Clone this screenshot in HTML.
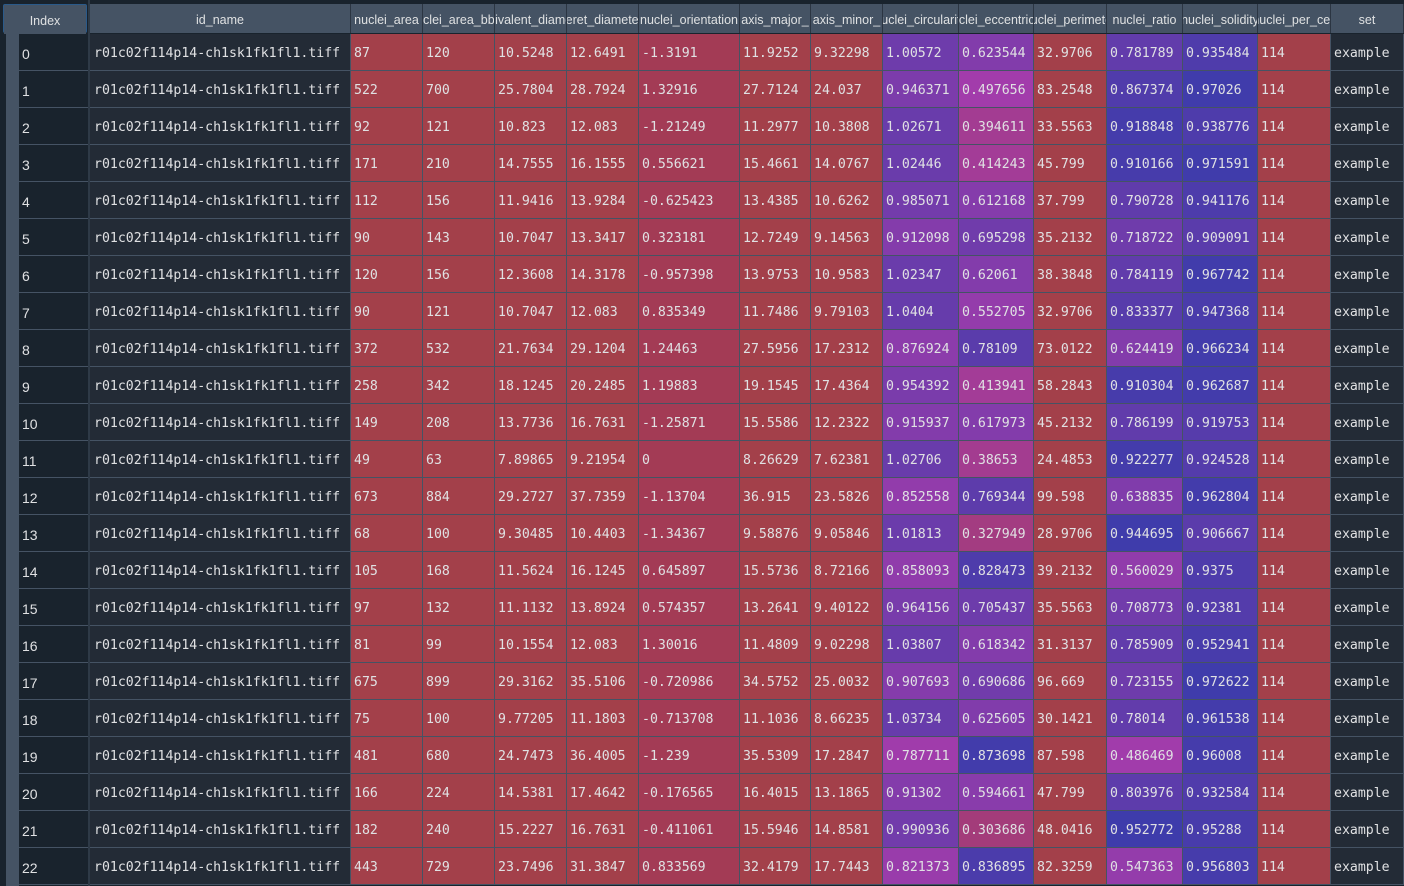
<!DOCTYPE html>
<html><head><meta charset="utf-8"><style>
*{margin:0;padding:0;box-sizing:border-box}
body{width:1404px;height:886px;overflow:hidden;background:#19232D;position:relative;font-family:"DejaVu Sans Mono","Liberation Mono",monospace;color:#E0E1E3}
.hd{position:absolute;top:4px;height:29px;display:flex;font-family:"Liberation Sans","DejaVu Sans",sans-serif;font-size:12.5px;color:#DFE1E2}
.hd div{background:#455364;border-right:1px solid #2b3542;display:flex;justify-content:center;align-items:center;overflow:hidden;white-space:nowrap;height:29px;padding-top:3px}
#hi{left:3px;width:84px;border:1px solid #2a5a8a;border-radius:2px}
#hm{left:90px}
#strip{position:absolute;left:6px;top:34px;width:13px;height:852px;background:#455364}
.ix{position:absolute;left:19px;width:69px;height:37px;border-bottom:1px solid #455364;font-family:"Liberation Sans",sans-serif;font-size:14px;line-height:36px;padding-top:2px;padding-left:3px}
.r{position:absolute;left:90px;height:37px;display:flex;font-size:13.2px}
.r span{display:block;height:37px;line-height:36px;padding-top:2px;padding-left:3px;border-right:1px solid #455364;border-bottom:1px solid #455364;white-space:nowrap;overflow:hidden;background:#A3404A}
.r span:nth-child(1){width:261px;background:#232B36;padding-left:4px}
.r span:nth-child(2),.r span:nth-child(3),.r span:nth-child(4),.r span:nth-child(5){width:72px}
.r span:nth-child(6){width:101px;background:#A33B55}
.r span:nth-child(7){width:71px}
.r span:nth-child(8){width:72px}
.r span:nth-child(9){width:76px}
.r span:nth-child(10){width:75px}
.r span:nth-child(11){width:73px}
.r span:nth-child(12){width:76px}
.r span:nth-child(13){width:75px}
.r span:nth-child(14){width:73px}
.r span:nth-child(15){width:73px;background:#232B36}
#lines{position:absolute;left:88px;top:0;width:2px;height:886px;background:#2e3a47}
</style></head><body>
<div id="lines"></div>
<div class="hd" id="hi"><div style="width:82px;border:none">Index</div></div>
<div class="hd" id="hm">
<div style="width:261px">id_name</div><div style="width:72px">nuclei_area</div><div style="width:72px">nuclei_area_bbox</div><div style="width:72px">equivalent_diameter</div><div style="width:72px">feret_diameter</div><div style="width:101px">nuclei_orientation</div><div style="width:71px">axis_major_</div><div style="width:72px">axis_minor_</div><div style="width:76px">nuclei_circularity</div><div style="width:75px">nuclei_eccentricity</div><div style="width:73px">nuclei_perimeter</div><div style="width:76px">nuclei_ratio</div><div style="width:75px">nuclei_solidity</div><div style="width:73px">nuclei_per_cell</div><div style="width:73px">set</div>
</div>
<div id="strip"></div>
<div class="ix" style="top:34px">0</div><div class="ix" style="top:71px">1</div><div class="ix" style="top:108px">2</div><div class="ix" style="top:145px">3</div><div class="ix" style="top:182px">4</div><div class="ix" style="top:219px">5</div><div class="ix" style="top:256px">6</div><div class="ix" style="top:293px">7</div><div class="ix" style="top:330px">8</div><div class="ix" style="top:367px">9</div><div class="ix" style="top:404px">10</div><div class="ix" style="top:441px">11</div><div class="ix" style="top:478px">12</div><div class="ix" style="top:515px">13</div><div class="ix" style="top:552px">14</div><div class="ix" style="top:589px">15</div><div class="ix" style="top:626px">16</div><div class="ix" style="top:663px">17</div><div class="ix" style="top:700px">18</div><div class="ix" style="top:737px">19</div><div class="ix" style="top:774px">20</div><div class="ix" style="top:811px">21</div><div class="ix" style="top:848px">22</div>
<div class="r" style="top:34px"><span>r01c02f114p14-ch1sk1fk1fl1.tiff</span><span>87</span><span>120</span><span>10.5248</span><span>12.6491</span><span>-1.3191</span><span>11.9252</span><span>9.32298</span><span>1.00572</span><span>0.623544</span><span>32.9706</span><span>0.781789</span><span>0.935484</span><span>114</span><span>example</span></div>
<div class="r" style="top:71px"><span>r01c02f114p14-ch1sk1fk1fl1.tiff</span><span>522</span><span>700</span><span>25.7804</span><span>28.7924</span><span>1.32916</span><span>27.7124</span><span>24.037</span><span>0.946371</span><span>0.497656</span><span>83.2548</span><span>0.867374</span><span>0.97026</span><span>114</span><span>example</span></div>
<div class="r" style="top:108px"><span>r01c02f114p14-ch1sk1fk1fl1.tiff</span><span>92</span><span>121</span><span>10.823</span><span>12.083</span><span>-1.21249</span><span>11.2977</span><span>10.3808</span><span>1.02671</span><span>0.394611</span><span>33.5563</span><span>0.918848</span><span>0.938776</span><span>114</span><span>example</span></div>
<div class="r" style="top:145px"><span>r01c02f114p14-ch1sk1fk1fl1.tiff</span><span>171</span><span>210</span><span>14.7555</span><span>16.1555</span><span>0.556621</span><span>15.4661</span><span>14.0767</span><span>1.02446</span><span>0.414243</span><span>45.799</span><span>0.910166</span><span>0.971591</span><span>114</span><span>example</span></div>
<div class="r" style="top:182px"><span>r01c02f114p14-ch1sk1fk1fl1.tiff</span><span>112</span><span>156</span><span>11.9416</span><span>13.9284</span><span>-0.625423</span><span>13.4385</span><span>10.6262</span><span>0.985071</span><span>0.612168</span><span>37.799</span><span>0.790728</span><span>0.941176</span><span>114</span><span>example</span></div>
<div class="r" style="top:219px"><span>r01c02f114p14-ch1sk1fk1fl1.tiff</span><span>90</span><span>143</span><span>10.7047</span><span>13.3417</span><span>0.323181</span><span>12.7249</span><span>9.14563</span><span>0.912098</span><span>0.695298</span><span>35.2132</span><span>0.718722</span><span>0.909091</span><span>114</span><span>example</span></div>
<div class="r" style="top:256px"><span>r01c02f114p14-ch1sk1fk1fl1.tiff</span><span>120</span><span>156</span><span>12.3608</span><span>14.3178</span><span>-0.957398</span><span>13.9753</span><span>10.9583</span><span>1.02347</span><span>0.62061</span><span>38.3848</span><span>0.784119</span><span>0.967742</span><span>114</span><span>example</span></div>
<div class="r" style="top:293px"><span>r01c02f114p14-ch1sk1fk1fl1.tiff</span><span>90</span><span>121</span><span>10.7047</span><span>12.083</span><span>0.835349</span><span>11.7486</span><span>9.79103</span><span>1.0404</span><span>0.552705</span><span>32.9706</span><span>0.833377</span><span>0.947368</span><span>114</span><span>example</span></div>
<div class="r" style="top:330px"><span>r01c02f114p14-ch1sk1fk1fl1.tiff</span><span>372</span><span>532</span><span>21.7634</span><span>29.1204</span><span>1.24463</span><span>27.5956</span><span>17.2312</span><span>0.876924</span><span>0.78109</span><span>73.0122</span><span>0.624419</span><span>0.966234</span><span>114</span><span>example</span></div>
<div class="r" style="top:367px"><span>r01c02f114p14-ch1sk1fk1fl1.tiff</span><span>258</span><span>342</span><span>18.1245</span><span>20.2485</span><span>1.19883</span><span>19.1545</span><span>17.4364</span><span>0.954392</span><span>0.413941</span><span>58.2843</span><span>0.910304</span><span>0.962687</span><span>114</span><span>example</span></div>
<div class="r" style="top:404px"><span>r01c02f114p14-ch1sk1fk1fl1.tiff</span><span>149</span><span>208</span><span>13.7736</span><span>16.7631</span><span>-1.25871</span><span>15.5586</span><span>12.2322</span><span>0.915937</span><span>0.617973</span><span>45.2132</span><span>0.786199</span><span>0.919753</span><span>114</span><span>example</span></div>
<div class="r" style="top:441px"><span>r01c02f114p14-ch1sk1fk1fl1.tiff</span><span>49</span><span>63</span><span>7.89865</span><span>9.21954</span><span>0</span><span>8.26629</span><span>7.62381</span><span>1.02706</span><span>0.38653</span><span>24.4853</span><span>0.922277</span><span>0.924528</span><span>114</span><span>example</span></div>
<div class="r" style="top:478px"><span>r01c02f114p14-ch1sk1fk1fl1.tiff</span><span>673</span><span>884</span><span>29.2727</span><span>37.7359</span><span>-1.13704</span><span>36.915</span><span>23.5826</span><span>0.852558</span><span>0.769344</span><span>99.598</span><span>0.638835</span><span>0.962804</span><span>114</span><span>example</span></div>
<div class="r" style="top:515px"><span>r01c02f114p14-ch1sk1fk1fl1.tiff</span><span>68</span><span>100</span><span>9.30485</span><span>10.4403</span><span>-1.34367</span><span>9.58876</span><span>9.05846</span><span>1.01813</span><span>0.327949</span><span>28.9706</span><span>0.944695</span><span>0.906667</span><span>114</span><span>example</span></div>
<div class="r" style="top:552px"><span>r01c02f114p14-ch1sk1fk1fl1.tiff</span><span>105</span><span>168</span><span>11.5624</span><span>16.1245</span><span>0.645897</span><span>15.5736</span><span>8.72166</span><span>0.858093</span><span>0.828473</span><span>39.2132</span><span>0.560029</span><span>0.9375</span><span>114</span><span>example</span></div>
<div class="r" style="top:589px"><span>r01c02f114p14-ch1sk1fk1fl1.tiff</span><span>97</span><span>132</span><span>11.1132</span><span>13.8924</span><span>0.574357</span><span>13.2641</span><span>9.40122</span><span>0.964156</span><span>0.705437</span><span>35.5563</span><span>0.708773</span><span>0.92381</span><span>114</span><span>example</span></div>
<div class="r" style="top:626px"><span>r01c02f114p14-ch1sk1fk1fl1.tiff</span><span>81</span><span>99</span><span>10.1554</span><span>12.083</span><span>1.30016</span><span>11.4809</span><span>9.02298</span><span>1.03807</span><span>0.618342</span><span>31.3137</span><span>0.785909</span><span>0.952941</span><span>114</span><span>example</span></div>
<div class="r" style="top:663px"><span>r01c02f114p14-ch1sk1fk1fl1.tiff</span><span>675</span><span>899</span><span>29.3162</span><span>35.5106</span><span>-0.720986</span><span>34.5752</span><span>25.0032</span><span>0.907693</span><span>0.690686</span><span>96.669</span><span>0.723155</span><span>0.972622</span><span>114</span><span>example</span></div>
<div class="r" style="top:700px"><span>r01c02f114p14-ch1sk1fk1fl1.tiff</span><span>75</span><span>100</span><span>9.77205</span><span>11.1803</span><span>-0.713708</span><span>11.1036</span><span>8.66235</span><span>1.03734</span><span>0.625605</span><span>30.1421</span><span>0.78014</span><span>0.961538</span><span>114</span><span>example</span></div>
<div class="r" style="top:737px"><span>r01c02f114p14-ch1sk1fk1fl1.tiff</span><span>481</span><span>680</span><span>24.7473</span><span>36.4005</span><span>-1.239</span><span>35.5309</span><span>17.2847</span><span>0.787711</span><span>0.873698</span><span>87.598</span><span>0.486469</span><span>0.96008</span><span>114</span><span>example</span></div>
<div class="r" style="top:774px"><span>r01c02f114p14-ch1sk1fk1fl1.tiff</span><span>166</span><span>224</span><span>14.5381</span><span>17.4642</span><span>-0.176565</span><span>16.4015</span><span>13.1865</span><span>0.91302</span><span>0.594661</span><span>47.799</span><span>0.803976</span><span>0.932584</span><span>114</span><span>example</span></div>
<div class="r" style="top:811px"><span>r01c02f114p14-ch1sk1fk1fl1.tiff</span><span>182</span><span>240</span><span>15.2227</span><span>16.7631</span><span>-0.411061</span><span>15.5946</span><span>14.8581</span><span>0.990936</span><span>0.303686</span><span>48.0416</span><span>0.952772</span><span>0.95288</span><span>114</span><span>example</span></div>
<div class="r" style="top:848px"><span>r01c02f114p14-ch1sk1fk1fl1.tiff</span><span>443</span><span>729</span><span>23.7496</span><span>31.3847</span><span>0.833569</span><span>32.4179</span><span>17.7443</span><span>0.821373</span><span>0.836895</span><span>82.3259</span><span>0.547363</span><span>0.956803</span><span>114</span><span>example</span></div>
<script>
(function(){
function col(h){h=h%1;var s=0.7,v=1,i=Math.floor(h*6),f=h*6-i,p=v*(1-s),q=v*(1-f*s),t=v*(1-(1-f)*s),r,g,b;
switch(i%6){case 0:r=v;g=t;b=p;break;case 1:r=q;g=v;b=p;break;case 2:r=p;g=v;b=t;break;case 3:r=p;g=q;b=v;break;case 4:r=t;g=p;b=v;break;default:r=v;g=p;b=q;}
var bg=[25,35,45];return 'rgb('+Math.round(.6*r*255+.4*bg[0])+','+Math.round(.6*g*255+.4*bg[1])+','+Math.round(.6*b*255+.4*bg[2])+')';}
var ranges={8:[0.34,1.26],9:[0.1,0.93],11:[0,1],12:[0.5,1]};
document.querySelectorAll('.r').forEach(function(r){var c=r.children;
for(var k in ranges){var v=parseFloat(c[k].textContent),mn=ranges[k][0],mx=ranges[k][1];
var h=0.66+0.33*(mx-v)/(mx-mn);h=Math.max(0.66,Math.min(0.99,h));c[k].style.background=col(h);}});
})();
</script>
</body></html>
